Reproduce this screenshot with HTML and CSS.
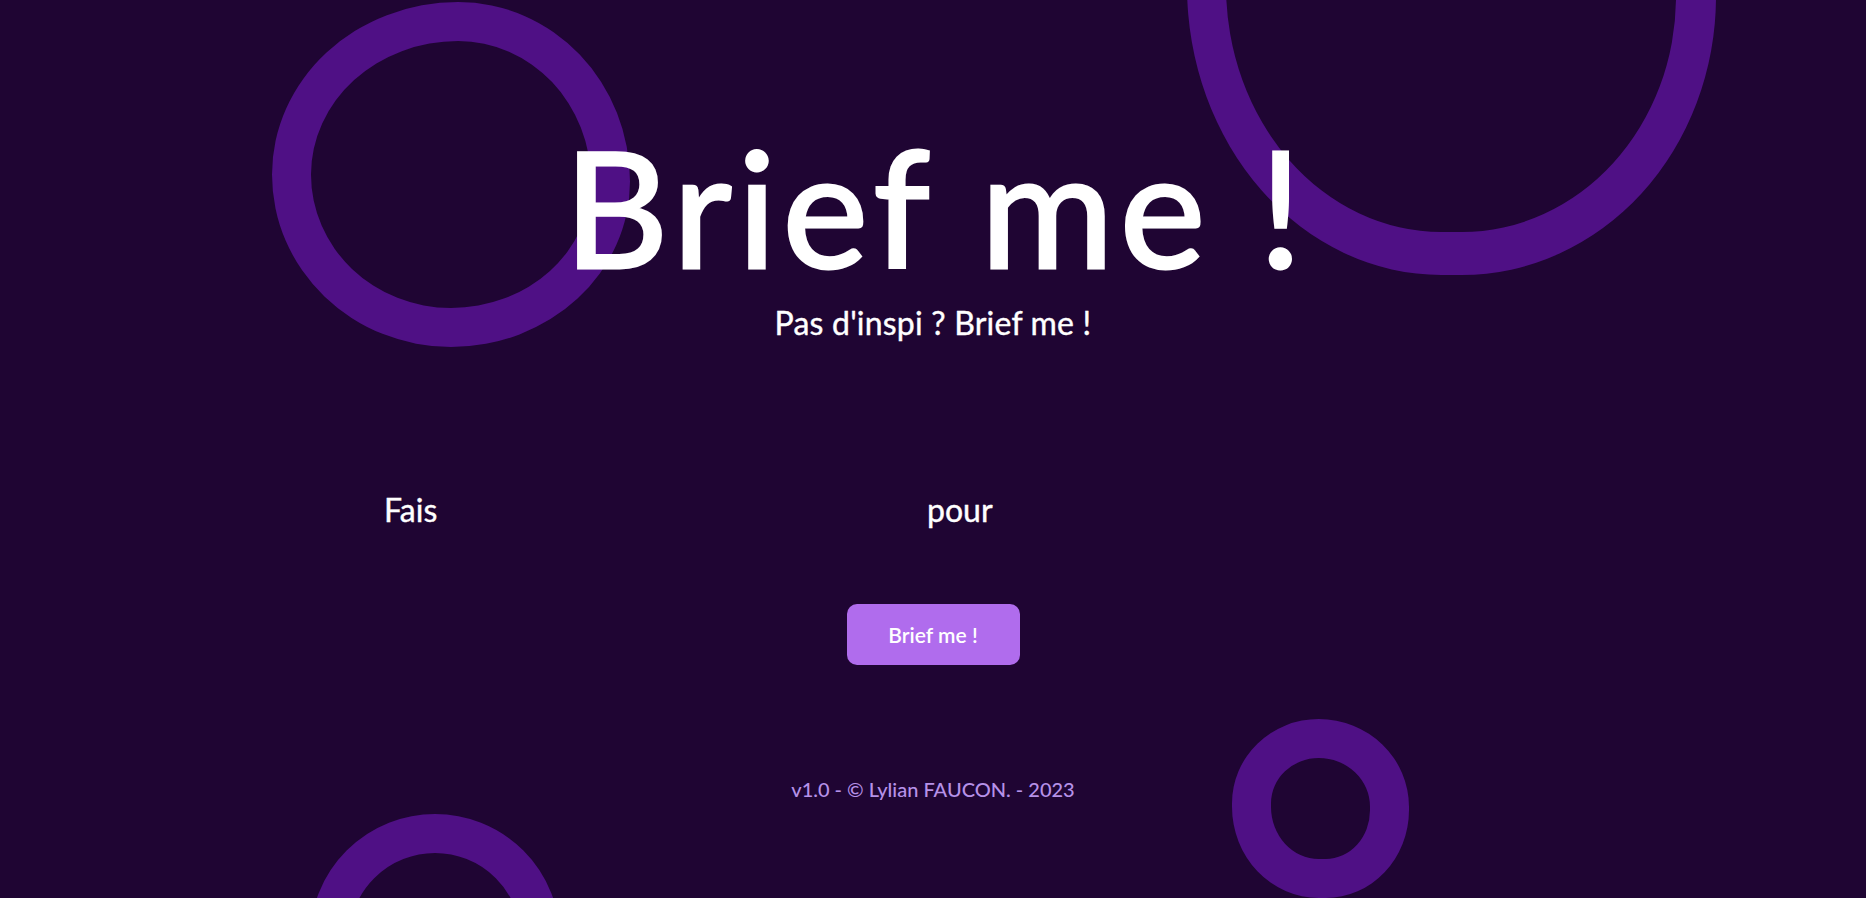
FILE: index.html
```html
<!DOCTYPE html>
<html lang="fr">
<head>
<meta charset="utf-8">
<title>Brief me !</title>
<link rel="stylesheet" href="styles.css">
</head>
<body>
<div class="backdrop">
  <div class="ring ring-tl"></div>
  <div class="ring ring-tr"></div>
  <div class="ring ring-br"></div>
  <div class="ring ring-bl"></div>
</div>
<main class="page">
  <header class="hero">
    <h1 class="title">Brief me !</h1>
    <p class="subtitle">Pas d'inspi ? Brief me !</p>
  </header>
  <section class="prompt">
    <div class="prompt-col"><span class="prompt-label">Fais</span></div>
    <div class="prompt-col"><span class="prompt-label">pour</span></div>
  </section>
  <button class="brief-btn" type="button">Brief me !</button>
  <footer class="footer">v1.0 - © Lylian FAUCON. - 2023</footer>
</main>
</body>
</html>
```
FILE: styles.css
```css
html, body {
  margin: 0;
  padding: 0;
  height: 898px;
  overflow: hidden;
}
body {
  background: #1f0533;
  color: #ffffff;
  font-family: "Lato", "Noto Sans", sans-serif;
  position: relative;
}
.backdrop {
  position: absolute;
  inset: 0;
  overflow: hidden;
  z-index: 0;
}
.ring {
  position: absolute;
  box-sizing: border-box;
  border: 39px solid #4f1085;
}
.ring-tl {
  left: 272px;
  top: 2px;
  width: 358px;
  height: 345px;
  border-radius: 52% 48% 50% 50% / 50% 52% 48% 50%;
}
.ring-tr {
  left: 1187px;
  top: -282px;
  width: 529px;
  height: 557px;
  border-width: 39px 40px 43px 39px;
  border-radius: 50% 50% 50% 50% / 50% 50% 52% 54%;
}
.ring-br {
  left: 1232px;
  top: 719px;
  width: 177px;
  height: 179px;
  border-radius: 50% 52% 48% 50% / 48% 50% 50% 52%;
}
.ring-bl {
  left: 310px;
  top: 814px;
  width: 250px;
  height: 250px;
  border-radius: 50%;
}
.page {
  position: relative;
  z-index: 1;
  display: flex;
  flex-direction: column;
  align-items: center;
  padding-top: 109px;
}
.hero {
  display: flex;
  flex-direction: column;
  align-items: center;
}
.title {
  margin: 0;
  padding-left: 6px;
  font-size: 162px;
  line-height: 194px;
  font-weight: 400;
  letter-spacing: 6px;
  -webkit-text-stroke: 3px #ffffff;
}
.subtitle {
  margin: 0;
  font-size: 32px;
  line-height: 40px;
  font-weight: 400;
  letter-spacing: 0.2px;
  -webkit-text-stroke: 0.4px #ffffff;
}
.prompt {
  margin-top: 147px;
  width: 1098px;
  display: grid;
  grid-template-columns: 543px 1fr;
}
.prompt-label {
  font-size: 32px;
  line-height: 40px;
  font-weight: 400;
  -webkit-text-stroke: 0.4px #ffffff;
}
.brief-btn {
  margin-top: 74px;
  width: 173px;
  height: 61px;
  border: none;
  border-radius: 10px;
  background: #b06ced;
  color: #ffffff;
  font-family: inherit;
  font-size: 21px;
  font-weight: 600;
}
.footer {
  margin-top: 112px;
  font-size: 20px;
  line-height: 24px;
  font-weight: 500;
  color: #b691e8;
}
```
